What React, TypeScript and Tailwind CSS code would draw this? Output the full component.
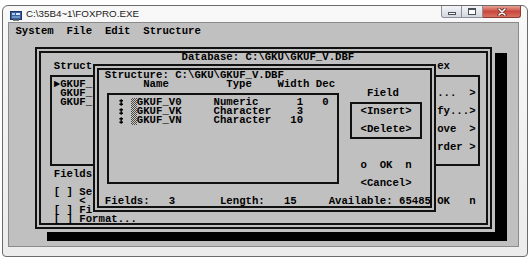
import type { ReactNode } from "react";

// DOS text grid: 80 columns x 24 rows of 6.4 x 8.96 px cells
const dos =
  "font-['Liberation_Mono','DejaVu_Sans_Mono',monospace] font-bold text-[10.66px] leading-[8.96px] text-black";

function Txt({ className, children }: { className: string; children: ReactNode }) {
  return <div className={`${className} whitespace-pre`}>{children}</div>;
}

// CP437 0x12 (up-down arrow), as it shows at this size
function UpDown({ className }: { className: string }) {
  return (
    <svg className={className} width="6.4" height="8.96" viewBox="0 0 6.4 8.96">
      <path d="M3.2 1.2 V7.8 M1.4 2.8 H5 M1.4 6.2 H5" stroke="#000" strokeWidth="1.4" fill="none" />
    </svg>
  );
}

function AppIcon() {
  return (
    <svg width="12" height="11" viewBox="0 0 12 11">
      <rect x="0.5" y="1.5" width="11" height="8" fill="#3a5d9c" stroke="#1d3466" />
      <rect x="2" y="3" width="3" height="2" fill="#a8cdf4" />
      <rect x="6" y="3" width="4" height="2" fill="#d8e8f8" />
      <rect x="2" y="6" width="8" height="2" fill="#6f93c9" />
      <rect x="3" y="9.5" width="6" height="1.5" fill="#7a7a7a" />
    </svg>
  );
}

function WindowButtons() {
  return (
    <div className="ml-auto mr-[6px] self-start flex h-[12px]">
      <div className="w-[21px] h-full border border-t-0 border-[#8b9099] rounded-bl-[3px] bg-linear-to-b from-[#f3f5f8] to-[#d3d8df] flex items-center justify-center">
        <div className="w-[8px] h-[3px] mt-[3px] bg-white border border-[#4a4f57]" />
      </div>
      <div className="w-[21px] h-full border border-t-0 border-l-0 border-[#8b9099] bg-linear-to-b from-[#f3f5f8] to-[#d3d8df] flex items-center justify-center">
        <div className="w-[8px] h-[7px] bg-white border border-t-2 border-[#4a4f57]" />
      </div>
      <div className="w-[38px] h-full border border-t-0 border-l-0 border-[#8a3a31] rounded-br-[3px] bg-linear-to-b from-[#e5a195] via-[#c8463b] to-[#d8715f] flex items-center justify-center">
        <svg width="10" height="8" viewBox="0 0 10 8">
          <path d="M2 1 L8 7 M8 1 L2 7" stroke="#5a1d18" strokeWidth="3" strokeLinecap="round" />
          <path d="M2 1 L8 7 M8 1 L2 7" stroke="#ffffff" strokeWidth="1.6" strokeLinecap="round" />
        </svg>
      </div>
    </div>
  );
}

export default function App() {
  return (
    <div className="w-[530px] h-[260px] bg-white overflow-hidden pt-[5px] pl-[2px]">
      <div className="w-[526px] h-[252px] rounded-t-[6px] rounded-b-[4px] border border-[#6b6b6b] bg-linear-to-b from-[#f8f8f8] to-[#ececec] flex flex-col">
        {/* title bar */}
        <div className="h-[16px] flex items-center">
          <div className="ml-[7px] mt-[2px]">
            <AppIcon />
          </div>
          <span className="ml-[4px] mt-[1px] font-['Liberation_Sans',Arial,sans-serif] text-[9.8px] text-[#222]">
            {"C:\\35B4~1\\FOXPRO.EXE"}
          </span>
          <WindowButtons />
        </div>

        {/* DOS client area */}
        <div className="ml-[5px] w-[511px] h-[225px] border border-[#8a8a8a] bg-[#c0c0c0] overflow-hidden pt-[3.5px]">
          <div className={`${dos} grid grid-cols-[repeat(80,6.4px)] grid-rows-[repeat(24,8.96px)]`}>
            <Txt className="row-start-1 col-start-2">{"System  File  Edit  Structure"}</Txt>

            {/* back dialog: Database */}
            <div className="col-start-5 col-end-77 row-start-3 row-end-24 ml-[0.5px] mr-[2.4px] mt-[3px] mb-[3px] border-[6px] border-double border-[#111]" />
            <Txt className="row-start-4 col-start-28">{"Database: C:\\GKU\\GKUF_V.DBF"}</Txt>
            <Txt className="row-start-5 col-start-8">Struct</Txt>
            <Txt className="row-start-5 col-start-68">ex</Txt>
            <div className="col-start-7 col-end-15 row-start-6 row-end-17 ml-[2.2px] my-[3.5px] border-2 border-r-0 border-[#111]" />
            <div className="col-start-62 col-end-75 row-start-6 row-end-17 mr-[2.2px] my-[3.5px] border-2 border-l-0 border-[#111]" />
            <Txt className="row-start-7 col-start-8">{"►GKUF_"}</Txt>
            <Txt className="row-start-8 col-start-9">GKUF_</Txt>
            <Txt className="row-start-9 col-start-9">GKUF_</Txt>
            <Txt className="row-start-8 col-start-68">{"...  >"}</Txt>
            <Txt className="row-start-10 col-start-68">{"fy...>"}</Txt>
            <Txt className="row-start-12 col-start-68">{"ove  >"}</Txt>
            <Txt className="row-start-14 col-start-68">{"rder >"}</Txt>
            <Txt className="row-start-17 col-start-8">Fields</Txt>
            <Txt className="row-start-19 col-start-8">{"[ ] Se"}</Txt>
            <Txt className="row-start-20 col-start-12">{"<"}</Txt>
            <Txt className="row-start-20 col-start-68">{"OK   n"}</Txt>
            <Txt className="row-start-21 col-start-8">{"[ ] Fi"}</Txt>
            <Txt className="row-start-22 col-start-8">{"[ ] Format..."}</Txt>

            {/* shadow */}
            <div className="col-start-77 col-end-79 row-start-4 row-end-25 bg-black" />
            <div className="col-start-7 col-end-79 row-start-24 row-end-25 bg-black" />

            {/* front dialog: Structure */}
            <div className="col-start-14 col-end-68 row-start-5 row-end-22 mx-[1px] mt-[2px] mb-[3px] border-[6px] border-double border-[#111] bg-[#c0c0c0]" />
            <Txt className="row-start-6 col-start-16">{"Structure: C:\\GKU\\GKUF_V.DBF"}</Txt>
            <Txt className="row-start-7 col-start-22">{"Name         Type    Width Dec"}</Txt>
            <Txt className="row-start-8 col-start-57">Field</Txt>

            <div className="col-start-16 col-end-53 row-start-8 row-end-19 mx-[2.2px] my-[3.5px] border-2 border-[#111]" />
            <div className="col-start-20 row-start-9 row-end-12 ml-[1px] bg-[repeating-conic-gradient(#4a4a4a_0_25%,#c8c8c8_0_50%)] bg-size-[2px_2px]" />
            <UpDown className="row-start-9 col-start-18" />
            <UpDown className="row-start-10 col-start-18" />
            <UpDown className="row-start-11 col-start-18" />
            <Txt className="row-start-9 col-start-21">{"GKUF_V0     Numeric      1   0"}</Txt>
            <Txt className="row-start-10 col-start-21">{"GKUF_VK     Character    3"}</Txt>
            <Txt className="row-start-11 col-start-21">{"GKUF_VN     Character   10"}</Txt>

            <div className="col-start-54 col-end-66 row-start-9 row-end-14 mx-[2.2px] my-[3.5px] border-2 border-[#111]" />
            <Txt className="row-start-10 col-start-56">{"<Insert>"}</Txt>
            <Txt className="row-start-12 col-start-56">{"<Delete>"}</Txt>
            <Txt className="row-start-16 col-start-56">{"o  OK  n"}</Txt>
            <Txt className="row-start-18 col-start-56">{"<Cancel>"}</Txt>
            <Txt className="row-start-20 col-start-16">
              {"Fields:   3       Length:   15     Available: 65485"}
            </Txt>
          </div>
        </div>
      </div>
    </div>
  );
}
